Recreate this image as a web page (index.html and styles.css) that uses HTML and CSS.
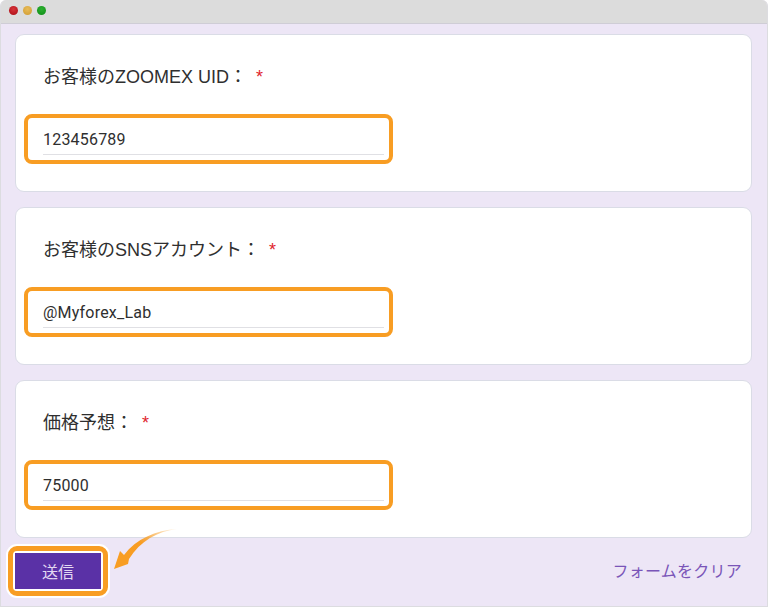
FILE: index.html
```html
<!DOCTYPE html>
<html lang="ja">
<head>
<meta charset="utf-8">
<title>フォーム</title>
<link rel="stylesheet" href="styles.css">
</head>
<body>
<div class="window">
  <div class="titlebar">
    <span class="dot red"></span>
    <span class="dot yellow"></span>
    <span class="dot green"></span>
  </div>
  <div class="content">
    <section class="card">
      <div class="label">お客様のZOOMEX UID： <span class="req">*</span></div>
      <div class="field"><div class="value">123456789</div></div>
    </section>
    <section class="card">
      <div class="label">お客様のSNSアカウント： <span class="req">*</span></div>
      <div class="field"><div class="value">@Myforex_Lab</div></div>
    </section>
    <section class="card">
      <div class="label">価格予想： <span class="req">*</span></div>
      <div class="field"><div class="value">75000</div></div>
    </section>
    <div class="footer">
      <div class="halo"><div class="ring"><button class="submit">送信</button></div></div>
      <svg class="arrow" width="70" height="48" viewBox="0 0 70 48" aria-hidden="true">
        <defs>
          <linearGradient id="tail" x1="0" y1="1" x2="1" y2="0">
            <stop offset="0.55" stop-color="#f89d23"/>
            <stop offset="1" stop-color="#f89d23" stop-opacity="0.1"/>
          </linearGradient>
        </defs>
        <path d="M65 2 C46 4 28 14 17 32 L16 37 L2 42 L8 24 L12 28 C24 12 44 3 65 2 Z" fill="url(#tail)"/>
      </svg>
      <a class="clear">フォームをクリア</a>
    </div>
  </div>
</div>
</body>
</html>
```

FILE: styles.css
```css
* { box-sizing: border-box; }
html, body { margin: 0; padding: 0; }
body {
  width: 768px;
  height: 607px;
  overflow: hidden;
  background: #ffffff;
  font-family: "Liberation Sans", "Noto Sans CJK JP", sans-serif;
}
.window {
  width: 768px;
  height: 607px;
  display: flex;
  flex-direction: column;
  background: #ede6f6;
  border: 1px solid #dcdce0;
  border-top: 0;
  border-radius: 6px 6px 0 0;
  overflow: hidden;
}
.titlebar {
  height: 24px;
  flex: none;
  display: flex;
  align-items: center;
  gap: 5px;
  padding: 0 0 2px 8px;
  background: #dcdcdc;
  border-bottom: 1px solid #cfcdd6;
}
.dot {
  width: 9px;
  height: 9px;
  border-radius: 50%;
}
.red { background: radial-gradient(circle at 50% 35%, #d8343a, #a80c14); }
.yellow { background: radial-gradient(circle at 50% 35%, #e8bc58, #cf9a30); }
.green { background: radial-gradient(circle at 50% 35%, #2cb030, #0e8c16); }
.content {
  flex: 1;
  display: flex;
  flex-direction: column;
  gap: 15px;
  padding: 11px 15px 0 14px;
  margin-top: -1px;
}
.card {
  height: 158px;
  flex: none;
  background: #ffffff;
  border: 1px solid #dadce6;
  border-radius: 9px;
  padding: 30px 0 0 8px;
}
.label {
  height: 24px;
  padding-left: 19px;
  font-size: 18px;
  line-height: 24px;
  color: #2f2f2f;
  white-space: nowrap;
}
.req { color: #e0242c; margin-left: 4px; }
.field {
  width: 369px;
  height: 50px;
  margin-top: 25px;
  padding: 10px 5px 0 15px;
  border: 4px solid #f89d23;
  border-radius: 8px;
}
.value {
  height: 27px;
  font-family: Roboto, "Liberation Sans", sans-serif;
  font-size: 16px;
  line-height: 24px;
  letter-spacing: 0.2px;
  color: #2f2f2f;
  border-bottom: 1px solid #e0e0e4;
}
.footer {
  position: relative;
  display: flex;
  align-items: flex-start;
  justify-content: space-between;
  margin: -9px 0 0 -9px;
  padding-right: 10px;
}
.halo {
  padding: 2px;
  background: #ffffff;
  border-radius: 11px;
}
.ring {
  padding: 2px;
  background: #ffffff;
  border: 5px solid #f89d23;
  border-radius: 9px;
  display: flex;
}
.submit {
  width: 86px;
  height: 36px;
  padding: 0;
  border: 0;
  background: #5a31a6;
  color: #e2d8f2;
  font-family: "Liberation Sans", "Noto Sans CJK JP", sans-serif;
  font-size: 16px;
}
.arrow {
  position: absolute;
  left: 106px;
  top: -17px;
}
.clear {
  margin-top: 17px;
  font-size: 16px;
  line-height: 22px;
  letter-spacing: 0.25px;
  color: #7a55b8;
  white-space: nowrap;
}
```
